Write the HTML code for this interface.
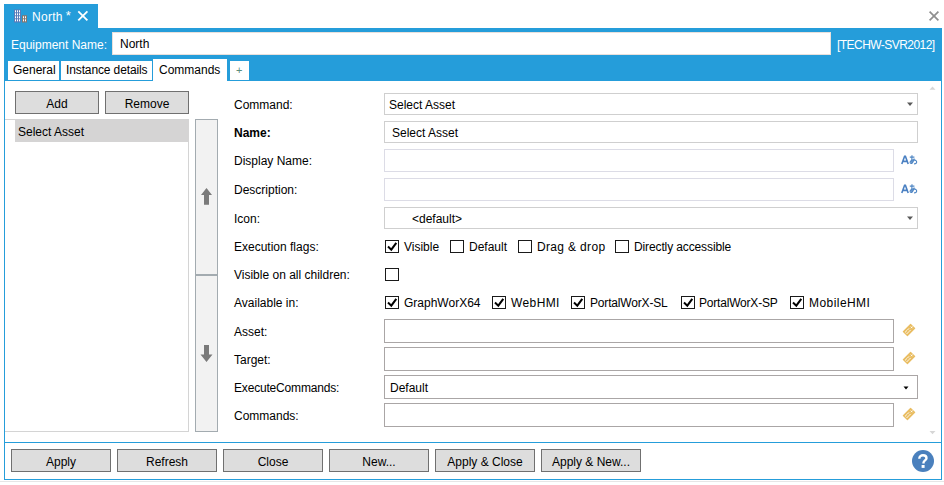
<!DOCTYPE html>
<html><head><meta charset="utf-8">
<style>
html,body{margin:0;padding:0;width:944px;height:485px;overflow:hidden;background:#fff;}
body{position:relative;font-family:"Liberation Sans",sans-serif;font-size:12px;color:#000;}
.a{position:absolute;box-sizing:border-box;}
.t{position:absolute;white-space:nowrap;line-height:14px;font-size:12px;}
.w{color:#fff;}
.blue{background:#259dda;}
.btn{position:absolute;box-sizing:border-box;background:#dddddd;border:1px solid #707070;height:23px;text-align:center;line-height:14px;}
.btn span{position:absolute;left:0;right:0;top:5px;}
.in1{position:absolute;box-sizing:border-box;background:#fff;border:1px solid #cfcfcf;}
.in2{position:absolute;box-sizing:border-box;background:#fff;border:1px solid #dcdce6;}
.in3{position:absolute;box-sizing:border-box;background:#fff;border:1px solid #aaa6a6;}
.cb{position:absolute;box-sizing:border-box;width:14px;height:13px;border:1px solid #1a1a1a;background:#fff;}
</style></head><body>
<!-- title tab -->
<div class="a blue" style="left:4px;top:4px;width:94px;height:24px;"></div>
<!-- blue header band -->
<div class="a blue" style="left:4px;top:28px;width:938px;height:52px;"></div>
<!-- close X top-right -->
<svg class="a" style="left:928px;top:10px" width="12" height="12" viewBox="0 0 12 12"><path d="M1.6 1.6L10.4 10.4M10.4 1.6L1.6 10.4" stroke="#8f8f8f" stroke-width="1.7"/></svg>

<div class="t w" style="left:32px;top:10px;letter-spacing:0.3px">North<span style="position:relative;left:3px;top:-1px;font-size:13px">*</span></div>
<svg class="a" style="left:77px;top:10px" width="12" height="12" viewBox="0 0 12 12"><path d="M1.3 1.3L10.4 10.4M10.4 1.3L1.3 10.4" stroke="#fff" stroke-width="1.8"/></svg>

<div class="t w" style="left:11px;top:38px;letter-spacing:0px">Equipment Name:</div>
<div class="a" style="left:112px;top:32px;width:719px;height:23px;background:#fff;border:1px solid #e8e0dc;"></div>
<div class="t" style="left:120px;top:37px;">North</div>
<div class="t w" style="left:837px;top:38px;letter-spacing:-0.55px">[TECHW-SVR2012]</div>

<!-- tabs -->
<div class="a" style="left:8px;top:61px;width:51px;height:19px;background:#fff;"></div>
<div class="t" style="left:13px;top:63px;">General</div>
<div class="a" style="left:61px;top:61px;width:91px;height:19px;background:#fff;"></div>
<div class="t" style="left:66px;top:63px;letter-spacing:-0.12px">Instance details</div>
<div class="a" style="left:153px;top:59px;width:74px;height:22px;background:#fff;"></div>
<div class="t" style="left:159px;top:63px;">Commands</div>
<div class="a" style="left:230px;top:61px;width:19px;height:19px;background:#fff;"></div>
<div class="t" style="left:236px;top:63px;color:#5b8c7c;font-size:11px">+</div>

<!-- window frame -->
<div class="a" style="left:4px;top:80px;width:938px;height:400px;border:1px solid #259dda;border-top:1px solid #259dda;"></div>
<div class="a" style="left:153px;top:80px;width:74px;height:1px;background:#fff;"></div>
<div class="a" style="left:4px;top:442px;width:938px;height:1px;background:#259dda;"></div>
<div class="a" style="left:0;top:481px;width:944px;height:1px;background:#e6e6e6;"></div>

<!-- left list -->
<div class="btn" style="left:15px;top:91px;width:84px;"><span>Add</span></div>
<div class="btn" style="left:105px;top:91px;width:84px;"><span>Remove</span></div>
<div class="a" style="left:5px;top:119px;width:184px;height:313px;border:1px solid #d4d4d4;border-left:none;"></div>
<div class="a" style="left:15px;top:120px;width:174px;height:22px;background:#d5d4d4;"></div>
<div class="t" style="left:18px;top:125px;">Select Asset</div>

<!-- scroll panel -->
<div class="a" style="left:195px;top:119px;width:23px;height:313px;background:#f2f2f2;border:1px solid #a3abb0;"></div>
<div class="a" style="left:196px;top:274px;width:21px;height:2px;background:#a3abb0;"></div>

<!-- form labels -->
<div class="t" style="left:234px;top:98px;">Command:</div>
<div class="t" style="left:234px;top:126px;font-weight:bold">Name:</div>
<div class="t" style="left:234px;top:154px;">Display Name:</div>
<div class="t" style="left:234px;top:183px;">Description:</div>
<div class="t" style="left:234px;top:212px;">Icon:</div>
<div class="t" style="left:234px;top:240px;">Execution flags:</div>
<div class="t" style="left:234px;top:268px;">Visible on all children:</div>
<div class="t" style="left:234px;top:296px;">Available in:</div>
<div class="t" style="left:234px;top:325px;">Asset:</div>
<div class="t" style="left:234px;top:353px;">Target:</div>
<div class="t" style="left:234px;top:381px;letter-spacing:-0.18px">ExecuteCommands:</div>
<div class="t" style="left:234px;top:409px;">Commands:</div>

<!-- form inputs -->
<div class="in1" style="left:384px;top:93px;width:534px;height:22px;"></div>
<div class="t" style="left:389px;top:98px;">Select Asset</div>
<svg class="a" style="left:906px;top:101px" width="8" height="6" viewBox="0 0 8 6"><path d="M1 1.5H7L4 5Z" fill="#595959"/></svg>
<div class="in1" style="left:384px;top:121px;width:534px;height:22px;"></div>
<div class="t" style="left:392px;top:126px;">Select Asset</div>
<div class="in2" style="left:384px;top:149px;width:510px;height:23px;"></div>
<div class="in2" style="left:384px;top:178px;width:510px;height:23px;"></div>
<div class="in1" style="left:384px;top:207px;width:534px;height:22px;"></div>
<div class="t" style="left:412px;top:212px;">&lt;default&gt;</div>
<svg class="a" style="left:906px;top:215px" width="8" height="6" viewBox="0 0 8 6"><path d="M1 1.5H7L4 5Z" fill="#595959"/></svg>

<!-- checkboxes -->
<div class="cb" style="left:385px;top:240px;"></div>
<div class="t" style="left:404px;top:240px;">Visible</div>
<div class="cb" style="left:450px;top:240px;"></div>
<div class="t" style="left:469px;top:240px;">Default</div>
<div class="cb" style="left:518px;top:240px;"></div>
<div class="t" style="left:537px;top:240px;letter-spacing:0.34px">Drag &amp; drop</div>
<div class="cb" style="left:615px;top:240px;"></div>
<div class="t" style="left:634px;top:240px;letter-spacing:-0.12px">Directly accessible</div>

<div class="cb" style="left:385px;top:268px;"></div>

<div class="cb" style="left:385px;top:296px;"></div>
<div class="t" style="left:404px;top:296px;">GraphWorX64</div>
<div class="cb" style="left:492px;top:296px;"></div>
<div class="t" style="left:511px;top:296px;letter-spacing:0.4px">WebHMI</div>
<div class="cb" style="left:571px;top:296px;"></div>
<div class="t" style="left:590px;top:296px;letter-spacing:-0.17px">PortalWorX-SL</div>
<div class="cb" style="left:681px;top:296px;"></div>
<div class="t" style="left:699px;top:296px;letter-spacing:-0.2px">PortalWorX-SP</div>
<div class="cb" style="left:790px;top:296px;"></div>
<div class="t" style="left:809px;top:296px;letter-spacing:0.44px">MobileHMI</div>

<div class="in3" style="left:384px;top:319px;width:510px;height:24px;"></div>
<div class="in3" style="left:384px;top:347px;width:510px;height:24px;"></div>
<div class="in3" style="left:384px;top:375px;width:534px;height:24px;"></div>
<div class="t" style="left:390px;top:381px;">Default</div>
<svg class="a" style="left:902px;top:385px" width="8" height="6" viewBox="0 0 8 6"><path d="M1.5 1.5H6.5L4 4.5Z" fill="#000"/></svg>
<div class="in3" style="left:384px;top:403px;width:510px;height:24px;"></div>

<!-- footer buttons -->
<div class="btn" style="left:11px;top:449px;width:100px;"><span>Apply</span></div>
<div class="btn" style="left:117px;top:449px;width:100px;"><span>Refresh</span></div>
<div class="btn" style="left:223px;top:449px;width:100px;"><span>Close</span></div>
<div class="btn" style="left:329px;top:449px;width:100px;"><span>New...</span></div>
<div class="btn" style="left:435px;top:449px;width:100px;"><span>Apply &amp; Close</span></div>
<div class="btn" style="left:541px;top:449px;width:100px;"><span>Apply &amp; New...</span></div>

<!-- building icon -->
<svg class="a" style="left:14px;top:9px" width="14" height="14" viewBox="0 0 14 14">
<rect x="0" y="0.5" width="7" height="13" fill="#5a7cba"/>
<rect x="8" y="6.2" width="5" height="7.3" fill="#877870"/>
<g fill="#fff">
<rect x="1" y="1.3" width="1" height="2"/><rect x="3" y="1.3" width="1" height="2"/><rect x="5" y="1.3" width="1" height="2"/>
<rect x="1" y="4.3" width="1" height="2"/><rect x="3" y="4.3" width="1" height="2"/><rect x="5" y="4.3" width="1" height="2"/>
<rect x="1" y="7.3" width="1" height="2"/><rect x="3" y="7.3" width="1" height="2"/><rect x="5" y="7.3" width="1" height="2"/>
<rect x="1" y="10.3" width="1" height="2"/><rect x="3" y="10.3" width="1" height="2"/><rect x="5" y="10.3" width="1" height="2"/>
<rect x="9" y="7.3" width="1" height="2"/><rect x="11" y="7.3" width="1" height="2"/>
<rect x="9" y="10.3" width="1" height="2"/><rect x="11" y="10.3" width="1" height="2"/>
</g></svg>

<!-- scroll arrows -->
<svg class="a" style="left:196px;top:185px" width="21" height="22" viewBox="0 0 21 22"><path d="M10.5 3L16 10H13V19.7H8V10H5Z" fill="#7a7a7a"/></svg>
<svg class="a" style="left:196px;top:342px" width="21" height="22" viewBox="0 0 21 22"><path d="M8 3H13V12.5H16.5L10.5 20L4.5 12.5H8Z" fill="#7a7a7a"/></svg>

<!-- right scroll triangles -->
<svg class="a" style="left:929px;top:85px" width="8" height="6" viewBox="0 0 8 6"><path d="M0.5 4.8H6.5L3.5 1.6Z" fill="#d6d6d6"/></svg>
<svg class="a" style="left:929px;top:430px" width="8" height="6" viewBox="0 0 8 6"><path d="M0.5 1H6.5L3.5 4.2Z" fill="#d6d6d6"/></svg>

<!-- checkmarks -->
<svg class="a" style="left:385px;top:240px" width="14" height="13" viewBox="0 0 14 13"><path d="M3 6.5L6.3 9.7L11.3 2.8" stroke="#000" stroke-width="2" fill="none"/></svg>
<svg class="a" style="left:385px;top:296px" width="14" height="13" viewBox="0 0 14 13"><path d="M3 6.5L6.3 9.7L11.3 2.8" stroke="#000" stroke-width="2" fill="none"/></svg>
<svg class="a" style="left:492px;top:296px" width="14" height="13" viewBox="0 0 14 13"><path d="M3 6.5L6.3 9.7L11.3 2.8" stroke="#000" stroke-width="2" fill="none"/></svg>
<svg class="a" style="left:571px;top:296px" width="14" height="13" viewBox="0 0 14 13"><path d="M3 6.5L6.3 9.7L11.3 2.8" stroke="#000" stroke-width="2" fill="none"/></svg>
<svg class="a" style="left:681px;top:296px" width="14" height="13" viewBox="0 0 14 13"><path d="M3 6.5L6.3 9.7L11.3 2.8" stroke="#000" stroke-width="2" fill="none"/></svg>
<svg class="a" style="left:790px;top:296px" width="14" height="13" viewBox="0 0 14 13"><path d="M3 6.5L6.3 9.7L11.3 2.8" stroke="#000" stroke-width="2" fill="none"/></svg>

<!-- Aあ icons -->
<svg class="a" style="left:900px;top:154px" width="19" height="12" viewBox="0 0 19 12">
<path d="M1.8 10L4.6 2.2H5.4L8.2 10M3 7.4H7" stroke="#4a80c2" stroke-width="1.6" fill="none"/>
<path d="M9.8 3.1H14.4M12 1.2C11.9 4 11.7 7.2 11.8 9.9M14.3 4.5C13.5 7.2 11.9 9.5 10.7 9.3C9.5 9.1 10.2 6 13.3 5.9C15.8 5.8 16.9 7.1 16.6 8.5C16.3 9.6 15.1 9.9 14 9.8" stroke="#4f86c4" stroke-width="1.15" fill="none"/>
</svg>
<svg class="a" style="left:900px;top:183px" width="19" height="12" viewBox="0 0 19 12">
<path d="M1.8 10L4.6 2.2H5.4L8.2 10M3 7.4H7" stroke="#4a80c2" stroke-width="1.6" fill="none"/>
<path d="M9.8 3.1H14.4M12 1.2C11.9 4 11.7 7.2 11.8 9.9M14.3 4.5C13.5 7.2 11.9 9.5 10.7 9.3C9.5 9.1 10.2 6 13.3 5.9C15.8 5.8 16.9 7.1 16.6 8.5C16.3 9.6 15.1 9.9 14 9.8" stroke="#4f86c4" stroke-width="1.15" fill="none"/>
</svg>

<!-- tag icons -->
<svg class="a" style="left:899px;top:320px" width="20" height="20" viewBox="0 0 20 20"><g transform="rotate(-45 10 10)"><rect x="4.3" y="6.5" width="11.4" height="7" rx="0.6" fill="#e9bd62"/><path d="M5.5 8.9H11.2M5.5 11.1H11.2" stroke="#fff" stroke-width="0.9" stroke-dasharray="2.6 0.5"/><path d="M13.7 8.8V11.2M12.5 10H14.9" stroke="#fff" stroke-width="0.85"/></g></svg>
<svg class="a" style="left:899px;top:348px" width="20" height="20" viewBox="0 0 20 20"><g transform="rotate(-45 10 10)"><rect x="4.3" y="6.5" width="11.4" height="7" rx="0.6" fill="#e9bd62"/><path d="M5.5 8.9H11.2M5.5 11.1H11.2" stroke="#fff" stroke-width="0.9" stroke-dasharray="2.6 0.5"/><path d="M13.7 8.8V11.2M12.5 10H14.9" stroke="#fff" stroke-width="0.85"/></g></svg>
<svg class="a" style="left:899px;top:404px" width="20" height="20" viewBox="0 0 20 20"><g transform="rotate(-45 10 10)"><rect x="4.3" y="6.5" width="11.4" height="7" rx="0.6" fill="#e9bd62"/><path d="M5.5 8.9H11.2M5.5 11.1H11.2" stroke="#fff" stroke-width="0.9" stroke-dasharray="2.6 0.5"/><path d="M13.7 8.8V11.2M12.5 10H14.9" stroke="#fff" stroke-width="0.85"/></g></svg>

<!-- help -->
<svg class="a" style="left:911px;top:449px" width="24" height="24" viewBox="0 0 24 24"><circle cx="12" cy="12" r="11" fill="#4a80bd"/><path d="M8.3 9.7C8.3 7.4 10 6.3 12 6.3C14.1 6.3 15.5 7.5 15.5 9.2C15.5 11.3 12.5 11.6 12.5 13.8V14.6" stroke="#fff" stroke-width="2.4" fill="none"/><rect x="10.6" y="16" width="3" height="2.9" fill="#fff"/></svg>
</body></html>
